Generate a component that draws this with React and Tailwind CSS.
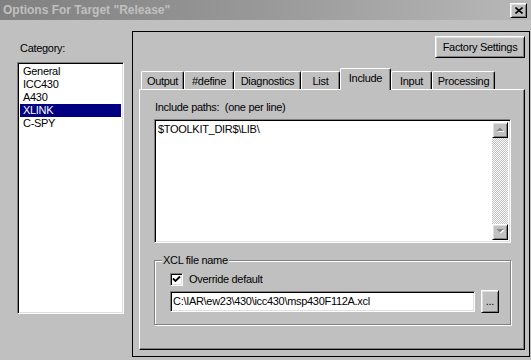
import React from 'react'

const raised =
  'border border-t-white border-l-white border-r-black border-b-black shadow-[inset_1px_1px_0_#dfdfdf,inset_-1px_-1px_0_#808080] bg-[#c0c0c0]'
const sunken =
  'border border-t-[#808080] border-l-[#808080] border-r-white border-b-white shadow-[inset_1px_1px_0_#000,inset_-1px_-1px_0_#dfdfdf] bg-white'

const categories = ['General', 'ICC430', 'A430', 'XLINK', 'C-SPY']

const tabs = [
  { label: 'Output', w: 'w-[43px]' },
  { label: '#define', w: 'w-[50px]' },
  { label: 'Diagnostics', w: 'w-[67px]' },
  { label: 'List', w: 'w-[39px]' },
  { label: 'Include', w: 'w-[51px]', active: true },
  { label: 'Input', w: 'w-[41px]' },
  { label: 'Processing', w: 'w-[63px]' },
]

function Arrow({ up }) {
  return (
    <svg width="9" height="6" viewBox="0 0 9 6">
      {up ? (
        <>
          <path d="M1.5 5h7L5 1.5z" fill="#fff" />
          <path d="M0.5 4h7L4 0.5z" fill="#808080" />
        </>
      ) : (
        <>
          <path d="M1.5 1h7L5 4.5z" fill="#fff" />
          <path d="M0.5 0h7L4 3.5z" fill="#808080" />
        </>
      )}
    </svg>
  )
}

export default function App() {
  return (
    <div className="w-[531px] h-[360px] overflow-hidden bg-[#c0c0c0] text-black text-[11px] tracking-[-0.3px] font-['Liberation_Sans',Arial,sans-serif] select-none">
      {/* title bar */}
      <div className="h-[20px] flex items-center pl-[3px] pr-[4px] bg-gradient-to-r from-[#808080] via-[#999999] to-[#b8b8b8]">
        <span className="font-bold text-[12px] tracking-normal text-[#c0c0c0] leading-none">
          Options For Target "Release"
        </span>
        <div className={`ml-auto w-[17px] h-[15px] flex items-center justify-center ${raised}`}>
          <svg width="8" height="7" viewBox="0 0 8 7">
            <path d="M0.5 0.5L7.5 6.5M7.5 0.5L0.5 6.5" stroke="#000" strokeWidth="1.6" />
          </svg>
        </div>
      </div>

      <div className="flex">
        {/* category list */}
        <div className="w-[132px] pl-[17px] pt-[22px]">
          <div className="pl-[3px] leading-[13px]">Category:</div>
          <div className={`mt-[7px] w-[107px] h-[252px] p-[2px] ${sunken}`}>
            {categories.map((c) => (
              <div
                key={c}
                className={`h-[13px] leading-[13px] pl-[3px] ${c === 'XLINK' ? 'bg-[#000080] text-white' : ''}`}
              >
                {c}
              </div>
            ))}
          </div>
        </div>

        {/* options frame */}
        <div className="mt-[11px] w-[398px] h-[326px] border border-black flex flex-col">
          <button className={`self-end mr-[4px] mt-[4px] w-[90px] h-[22px] leading-none ${raised}`}>
            Factory Settings
          </button>

          <div className="mt-[10px] pl-[8px] h-[21px] flex items-end">
            {tabs.map((t) =>
              t.active ? (
                <div
                  key={t.label}
                  className={`${t.w} h-[22px] -mb-[1px] relative z-10 bg-[#c0c0c0] border-t border-l border-white border-r border-r-black rounded-t-[2px] shadow-[inset_-1px_0_0_#808080] flex justify-center pt-[3px] leading-[13px]`}
                >
                  {t.label}
                </div>
              ) : (
                <div
                  key={t.label}
                  className={`${t.w} h-[18px] border-t border-l border-white border-r border-r-black rounded-t-[2px] shadow-[inset_-1px_0_0_#808080] flex justify-center pt-[3px] leading-[13px]`}
                >
                  {t.label}
                </div>
              )
            )}
          </div>

          <div className="ml-[6px] w-[386px] h-[261px] border border-t-white border-l-white border-r-black border-b-black shadow-[inset_-1px_-1px_0_#808080] pl-[14px] pt-[11px]">
            <div className="leading-[13px] pl-[1px]">Include paths:&nbsp; (one per line)</div>

            <div className={`mt-[5px] w-[357px] h-[124px] p-[2px] flex ${sunken}`}>
              <div className="flex-1 pl-[1px] pt-[1px] leading-[13px]">$TOOLKIT_DIR$\LIB\</div>
              <div className="w-[16px] flex flex-col">
                <div className={`w-[16px] h-[16px] flex items-center justify-center ${raised}`}>
                  <Arrow up />
                </div>
                <div className="flex-1 bg-[repeating-conic-gradient(#c0c0c0_0_25%,#ffffff_0_50%)] [background-size:2px_2px]" />
                <div className={`w-[16px] h-[16px] flex items-center justify-center ${raised}`}>
                  <Arrow />
                </div>
              </div>
            </div>

            <div className="relative mt-[17px] w-[357px] h-[65px] border border-[#808080] shadow-[1px_1px_0_#fff,inset_1px_1px_0_#fff] pl-[15px] pt-[12px]">
              <span className="absolute -top-[7px] left-[7px] px-[1px] bg-[#c0c0c0] leading-[13px]">
                XCL file name
              </span>
              <div className="flex items-center gap-[6px] h-[13px]">
                <div className={`w-[13px] h-[13px] flex items-center justify-center ${sunken}`}>
                  <svg width="9" height="9" viewBox="0 0 9 9">
                    <path d="M1 3.5L3.5 6L8 1.5" fill="none" stroke="#000" strokeWidth="1.8" />
                  </svg>
                </div>
                <span className="leading-[13px]">Override default</span>
              </div>
              <div className="mt-[4px] flex items-center gap-[6px]">
                <div className={`w-[305px] h-[21px] px-[2px] flex items-center ${sunken}`}>
                  C:\IAR\ew23\430\icc430\msp430F112A.xcl
                </div>
                <button className={`w-[18px] h-[23px] flex items-end justify-center pb-[5px] leading-none ${raised}`}>
                  ...
                </button>
              </div>
            </div>
          </div>
        </div>
      </div>
    </div>
  )
}
